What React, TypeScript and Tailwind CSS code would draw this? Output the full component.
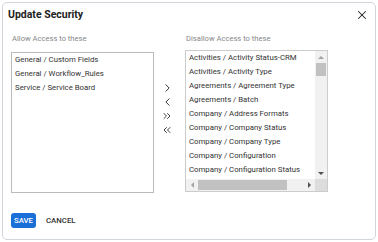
import { X, ChevronRight, ChevronLeft, ChevronsRight, ChevronsLeft } from 'lucide-react'

const allowed = ['General / Custom Fields', 'General / Workflow_Rules', 'Service / Service Board']

const disallowed = [
  'Activities / Activity Status-CRM',
  'Activities / Activity Type',
  'Agreements / Agreement Type',
  'Agreements / Batch',
  'Company / Address Formats',
  'Company / Company Status',
  'Company / Company Type',
  'Company / Configuration',
  'Company / Configuration Status',
]

export default function App() {
  return (
    <div className="w-[378px] h-[242px] bg-white p-[2px] font-['Roboto',sans-serif]">
      <div className="h-[238px] w-[374px] rounded-[5px] border border-gray-300 bg-white relative">
        <div className="flex items-center justify-between pl-[5px] pr-[6px] pt-[4px]">
          <span className="text-[10.5px] font-bold text-[#222] leading-[16px]">Update Security</span>
          <X size={14} strokeWidth={1.8} className="text-[#222]" />
        </div>

        <div className="flex mt-[10px] pl-[8px]">
          <div className="flex flex-col">
            <span className="text-[7.6px] text-[#888] leading-[12px] pl-[1px]">Allow Access to these</span>
            <div className="mt-[7px] w-[143px] h-[141px] border border-[#bbb]">
              {allowed.map((a) => (
                <div key={a} className="text-[7.8px] text-[#333] leading-[14px] pl-[3px] whitespace-nowrap">{a}</div>
              ))}
            </div>
          </div>

          <div className="w-[31px] flex flex-col items-center pt-[48px] pr-[5px] text-[#111]">
            <ChevronRight size={13} strokeWidth={1.6} className="h-[14px]" />
            <ChevronLeft size={13} strokeWidth={1.6} className="h-[14px]" />
            <ChevronsRight size={12} strokeWidth={1.6} className="h-[14px]" />
            <ChevronsLeft size={12} strokeWidth={1.6} className="h-[14px]" />
          </div>

          <div className="flex flex-col">
            <span className="text-[7.6px] text-[#888] leading-[12px] pl-[1px]">Disallow Access to these</span>
            <div className="mt-[5px] w-[143px] h-[142px] border border-[#ccc] flex flex-col">
              <div className="flex flex-1 min-h-0">
                <div className="flex-1 overflow-hidden">
                  {disallowed.map((a) => (
                    <div key={a} className="text-[7.8px] text-[#333] leading-[14px] pl-[3px] whitespace-nowrap">{a}</div>
                  ))}
                </div>
                <div className="w-[12px] bg-[#f1f1f1] flex flex-col items-center">
                  <div className="h-[12px] flex items-center justify-center">
                    <div className="w-0 h-0 border-l-[3px] border-r-[3px] border-b-[3px] border-l-transparent border-r-transparent border-b-[#a3a3a3]" />
                  </div>
                  <div className="w-[10px] h-[13px] bg-[#c1c1c1]" />
                  <div className="flex-1" />
                  <div className="h-[12px] flex items-center justify-center">
                    <div className="w-0 h-0 border-l-[3px] border-r-[3px] border-t-[3px] border-l-transparent border-r-transparent border-t-[#505050]" />
                  </div>
                </div>
              </div>
              <div className="h-[12px] flex bg-[#f1f1f1]">
                <div className="flex-1 flex items-center">
                  <div className="w-[12px] flex items-center justify-center">
                    <div className="w-0 h-0 border-t-[3px] border-b-[3px] border-r-[3px] border-t-transparent border-b-transparent border-r-[#a3a3a3]" />
                  </div>
                  <div className="w-[89px] h-[10px] bg-[#c1c1c1]" />
                  <div className="flex-1" />
                  <div className="w-[12px] flex items-center justify-center">
                    <div className="w-0 h-0 border-t-[3px] border-b-[3px] border-l-[3px] border-t-transparent border-b-transparent border-l-[#505050]" />
                  </div>
                </div>
                <div className="w-[12px] bg-[#dcdcdc]" />
              </div>
            </div>
          </div>
        </div>

        <div className="flex items-center gap-[10px] pl-[8px] mt-[20px]">
          <button className="h-[15px] px-[3px] rounded-[3px] bg-[#1a6fd8] text-white text-[7.8px] font-medium leading-[15px]">SAVE</button>
          <button className="text-[7.8px] font-medium text-[#333] leading-[15px]">CANCEL</button>
        </div>
      </div>
    </div>
  )
}
